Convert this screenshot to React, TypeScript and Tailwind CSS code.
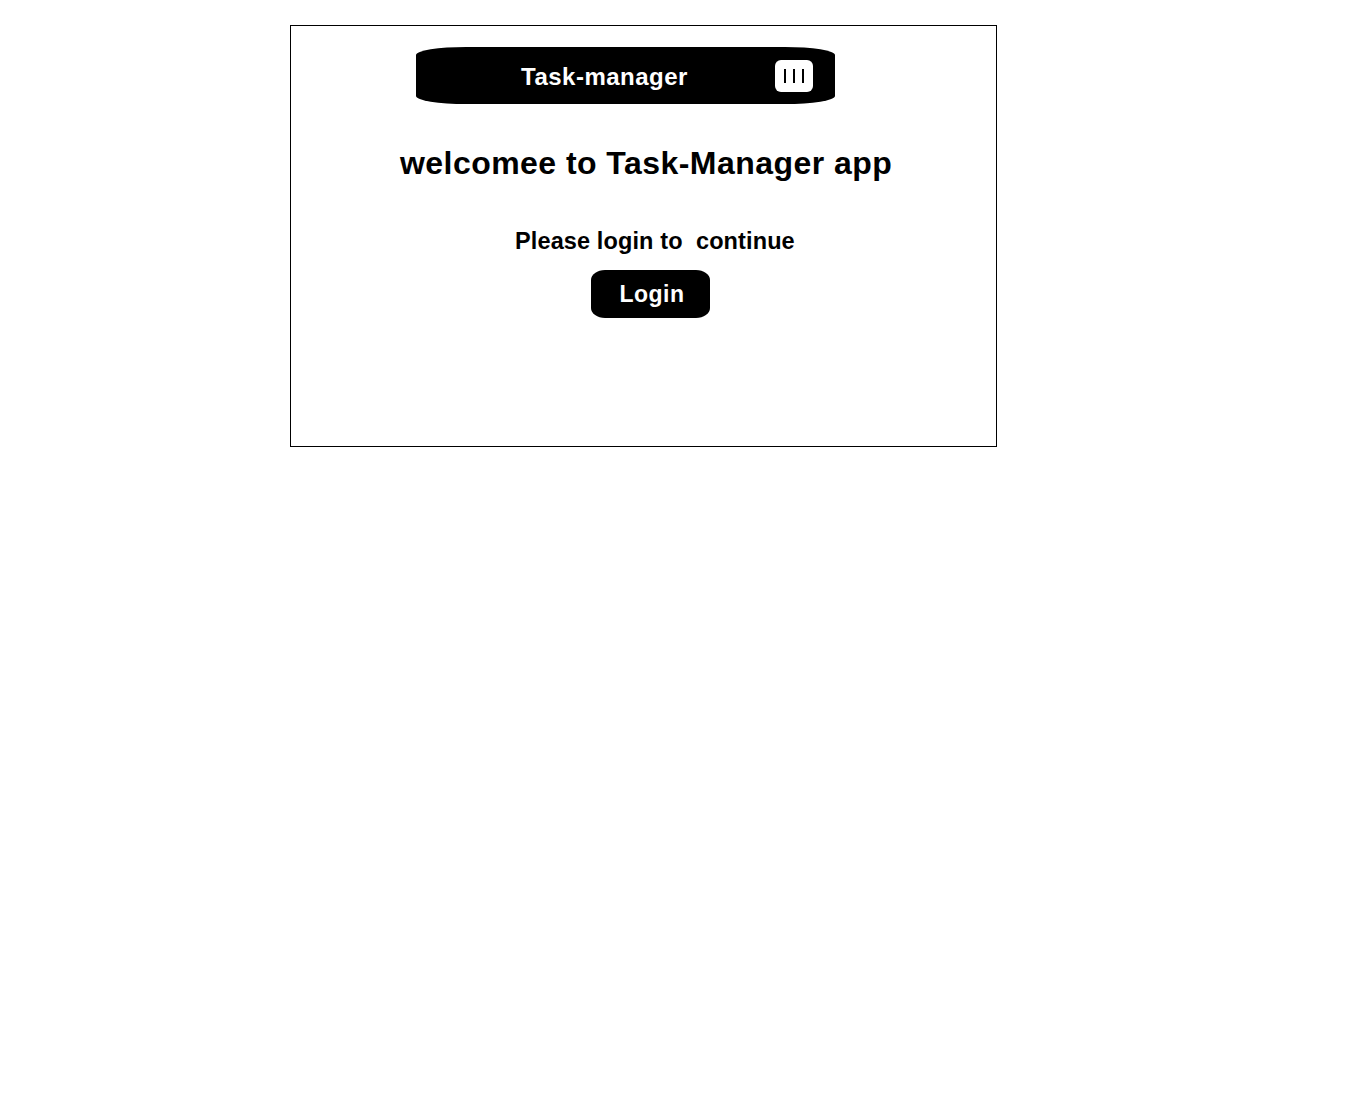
export default function App() {
  return (
    <div className="min-h-[1108px] w-full bg-white" style={{ fontFamily: '"Liberation Sans", Arial, sans-serif' }}>
      <div className="pt-[25px] pl-[290px]">
        <div className="flex h-[422px] w-[707px] flex-col border border-black">
          <nav className="mt-[21px] ml-[125px] flex h-[57px] w-[419px] items-center rounded-[50px/8px] bg-black">
            <span className="mt-[2px] ml-[105px] text-[24px] font-bold leading-[28px] tracking-[0.5px] text-white">Task-manager</span>
            <button className="ml-auto mr-[22px] flex h-[32px] w-[38px] items-center justify-center gap-[7px] rounded-[6px] bg-white">
              <span className="block h-[14px] w-[2px] bg-black" />
              <span className="block h-[14px] w-[2px] bg-black" />
              <span className="block h-[14px] w-[2px] bg-black" />
            </button>
          </nav>
          <h1 className="mt-[41px] ml-[109px] text-[32px] font-bold leading-[36px] tracking-[0.45px] text-black whitespace-nowrap">
            welcomee to Task-Manager app
          </h1>
          <p className="mt-[47px] ml-[224px] text-[23.5px] font-bold leading-[27px] tracking-[0.12px] text-black whitespace-pre">
            {"Please login to  continue"}
          </p>
          <button className="mt-[15px] ml-[300px] flex h-[48px] w-[119px] items-center justify-center rounded-[14px/10px] bg-black pl-[3px] text-[23px] font-bold tracking-[0.5px] text-white">
            Login
          </button>
        </div>
      </div>
    </div>
  );
}
